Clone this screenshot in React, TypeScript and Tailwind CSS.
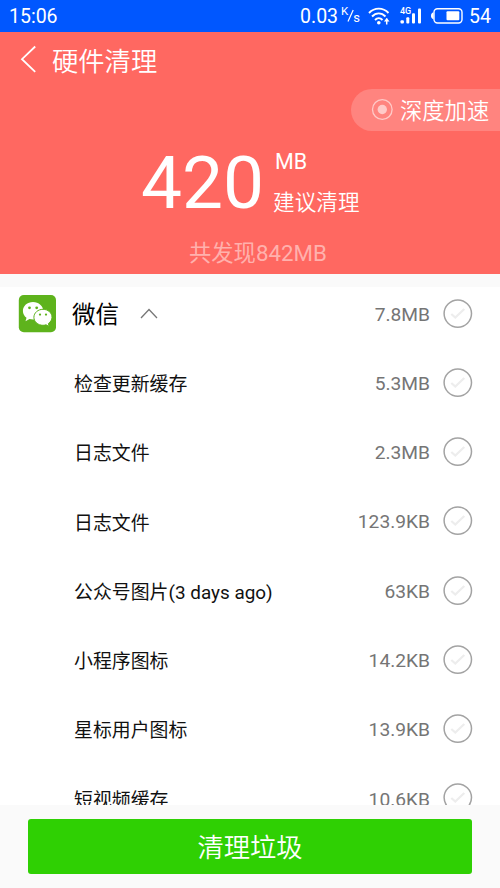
const files = [
  { name: '检查更新缓存', size: '5.3MB' },
  { name: '日志文件', size: '2.3MB' },
  { name: '日志文件', size: '123.9KB' },
  { name: '公众号图片(3 days ago)', size: '63KB' },
  { name: '小程序图标', size: '14.2KB' },
  { name: '星标用户图标', size: '13.9KB' },
  { name: '短视频缓存', size: '10.6KB' },
];

function CheckCircle() {
  return (
    <svg width="30" height="30" viewBox="0 0 30 30" fill="none" className="shrink-0">
      <circle cx="14.8" cy="14.6" r="13.7" stroke="#a3a3a3" strokeWidth="1.5" />
      <path d="M8.3 15l4 3.6 9-8.6" stroke="#ededed" strokeWidth="2.2" />
    </svg>
  );
}

function WeChatIcon() {
  return (
    <svg width="38" height="38" viewBox="0 0 38 38" className="shrink-0">
      <rect x="0.8" y="0" width="37.2" height="37.2" rx="5" fill="#5eb31c" />
      <path
        d="M15 7C9.3 7 4.9 10.9 4.9 15.9c0 2.8 1.4 5.2 3.6 6.8l-1 3.6 4-2.2c1.1.3 2.3.5 3.5.5 5.7 0 10.3-3.9 10.3-8.7S20.7 7 15 7z"
        fill="#fff"
      />
      <path
        d="M25 14.3c-5 0-9.1 3.5-9.1 8s4.1 8 9.1 8c1.1 0 2.1-.2 3.1-.5l3 1.7-.7-3c2.1-1.5 3.6-3.7 3.6-6.2 0-4.5-4-8-9-8z"
        fill="#fff"
        stroke="#5eb31c"
        strokeWidth="1"
      />
      <g fill="#5eb31c">
        <circle cx="11.5" cy="12.8" r="1.4" />
        <circle cx="18.7" cy="12.8" r="1.4" />
        <circle cx="22" cy="19.6" r="1.15" />
        <circle cx="28" cy="19.6" r="1.15" />
      </g>
    </svg>
  );
}

function StatusBar() {
  return (
    <div className="flex h-8 items-center bg-[#0057ff] px-[9px] text-[19.5px] font-[450] text-white">
      <span className="pt-px">15:06</span>
      <span className="ml-auto pt-px">0.03</span>

      {/* Network speed unit */}
      <span className="ml-[3px] flex h-5 w-[19px] text-[11.5px] leading-none">
        <span>K</span>
        <svg width="7" height="16" viewBox="0 0 7 16" className="-mx-px mt-0.5 shrink-0">
          <path d="M6.2 2L1 13.5" stroke="#fff" strokeWidth="1.2" />
        </svg>
        <span className="mt-[5px] text-[13px]">s</span>
      </span>

      {/* Wifi */}
      <svg width="22" height="18" viewBox="0 0 22 18" fill="none" className="ml-2">
        <g stroke="#fff" strokeWidth="1.9">
          <path d="M1 6C6.5.2 15 .2 20.5 6" />
          <path d="M4 9.5c4-4.2 9.5-4.2 13.500 0" />
          <path d="M7 13c2.3-2.5 5.2-2.5 7.5 0" />
        </g>
        <circle cx="10.8" cy="15.7" r="1.8" fill="#fff" />
        <path d="M18.7 11.5v6" stroke="#fff" strokeWidth="1.5" />
        <path d="M15.9 14.5l2.8-3.5 2.8 3.5z" fill="#fff" />
      </svg>

      {/* Signal strength */}
      <span className="relative ml-2.5 block h-[18px] w-[22px]">
        <span className="absolute left-0 top-0 text-[9px] leading-[8px] font-medium tracking-tight">4G</span>
        <svg width="22" height="18" viewBox="0 0 22 18" fill="#fff">
          <rect x="0.5" y="13.2" width="3.4" height="3.4" rx="1" />
          <rect x="6.3" y="10.2" width="3" height="6.4" rx="1" />
          <rect x="12" y="6.2" width="3" height="10.4" rx="1" />
          <rect x="18" y="1.5" width="3" height="15.1" rx="1" />
        </svg>
      </span>

      {/* Battery */}
      <svg width="33" height="18" viewBox="0 0 33 18" fill="none" className="ml-2">
        <rect x="4" y="1.7" width="28" height="14.3" rx="3.5" stroke="#fff" strokeWidth="1.4" />
        <path d="M3.5 5.3C1.8 6 1 7 1 8.8s.8 2.8 2.5 3.5z" fill="#fff" />
        <rect x="16.5" y="4.3" width="12.8" height="9" rx="1" fill="#fff" />
      </svg>
      <span className="ml-1.5 pt-px">54</span>
    </div>
  );
}

function Header() {
  return (
    <header className="h-[242px] bg-[#ff6861] text-white">
      <div className="flex h-[57px] items-center pl-5">
        <svg width="17" height="28" viewBox="0 0 17 28" fill="none" className="-mt-1">
          <path d="M15.2 1.5L2 14.2l13.2 12.6" stroke="#fff" strokeWidth="1.8" />
        </svg>
        <h1 className="ml-[15px] pt-[3px] text-[26.3px] font-[350] leading-none">硬件清理</h1>
      </div>

      <div className="ml-auto flex h-[42px] w-[149px] items-center rounded-l-full bg-[#ff847f] pl-5">
        <svg width="22" height="22" viewBox="0 0 22 22" fill="none">
          <circle cx="11.3" cy="10.5" r="9.8" stroke="#ffcac8" strokeWidth="1.3" />
          <circle cx="11.3" cy="10.5" r="4.7" fill="#ffcac8" />
        </svg>
        <span className="ml-[7px] whitespace-nowrap pt-0.5 text-[22.3px] font-[350] leading-none">
          深度加速
        </span>
      </div>

      <div className="flex pl-[141px] pt-[15px]">
        <span className="text-[73px] leading-[74px]">420</span>
        <div className="ml-[9px] flex flex-col">
          <span className="ml-0.5 mt-1 text-[21.5px] leading-6">MB</span>
          <span className="mt-[17px] text-[21.6px] font-[350] leading-6">建议清理</span>
        </div>
      </div>

      <p className="mt-[19px] pl-[189px] text-[22.3px] leading-7 text-[#ffb1ad]">共发现842MB</p>
    </header>
  );
}

function App() {
  return (
    <div className="flex h-[888px] w-[500px] flex-col overflow-hidden bg-[#fafafa] font-['Roboto','Noto_Sans_CJK_SC',sans-serif]">
      <StatusBar />
      <Header />

      {/* Junk list */}
      <main className="mt-[13px] h-[518px] overflow-hidden bg-white">
        <div className="mb-2 flex h-[53px] items-center pl-[18px] pr-[27px]">
          <WeChatIcon />
          <h2 className="ml-4 pt-1 text-[23.5px] text-black">微信</h2>
          <svg width="18" height="11" viewBox="0 0 18 11" fill="none" className="ml-[21px]">
            <path d="M1 10l8-8.5L17 10" stroke="#777" strokeWidth="1.3" />
          </svg>
          <span className="ml-auto mr-[13px] pt-[3px] text-[19.2px] text-[#757575]">7.8MB</span>
          <CheckCircle />
        </div>

        {files.map((file, i) => (
          <div key={i} className="flex h-[69.3px] items-center pl-[74px] pr-[27px]">
            <span className="pt-[5px] text-[18.9px] text-[#111]">{file.name}</span>
            <span className="ml-auto mr-[13px] pt-[3px] text-[19.2px] text-[#757575]">{file.size}</span>
            <CheckCircle />
          </div>
        ))}
      </main>

      <footer className="px-7 pt-3.5">
        <button className="h-[55px] w-full rounded-[3px] bg-[#2fd003] pt-1 text-[26.3px] font-[350] text-white">
          清理垃圾
        </button>
      </footer>
    </div>
  );
}

export default App;
